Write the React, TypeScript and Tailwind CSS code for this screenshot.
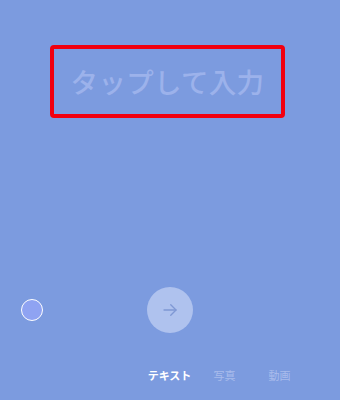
import React from "react";

export default function App() {
  return (
    <div
      className="w-[340px] h-[400px] bg-[#7c9bdf] flex flex-col overflow-hidden"
      style={{ fontFamily: '"Noto Sans CJK JP", "Noto Sans", sans-serif' }}
    >
      <div className="pt-[45px] pl-[50px]">
        <div className="w-[235px] h-[73px] border-[4.5px] border-[#f2000f] rounded-[4px] flex items-center justify-center">
          <span className="text-[27.5px] leading-none font-medium text-[#9cb2eb] tracking-[0.3px]">タップして入力</span>
        </div>
      </div>
      <div className="flex-1" />
      <div className="relative h-[46px] mb-[27px]">
        <div className="absolute left-[21px] top-[12px] w-[22px] h-[22px] rounded-full border-[1.5px] border-white bg-[#8fa3f2]" />
        <div className="absolute left-[147px] top-0 w-[46px] h-[46px] rounded-full bg-[#afc2ee] flex items-center justify-center">
          <svg width="18" height="18" viewBox="0 0 24 24" fill="none" stroke="#7f98d4" strokeWidth="1.8" strokeLinecap="round" strokeLinejoin="round">
            <path d="M4 12h16" />
            <path d="M13 5l7 7-7 7" />
          </svg>
        </div>
      </div>
      <div className="flex pl-[142px] h-[30px] mb-[10px] items-center">
        <div className="w-[55px] text-center text-[11px] font-bold text-white">テキスト</div>
        <div className="w-[55px] text-center text-[11px] text-[#a9bcec]">写真</div>
        <div className="w-[55px] text-center text-[11px] text-[#a9bcec]">動画</div>
      </div>
    </div>
  );
}
